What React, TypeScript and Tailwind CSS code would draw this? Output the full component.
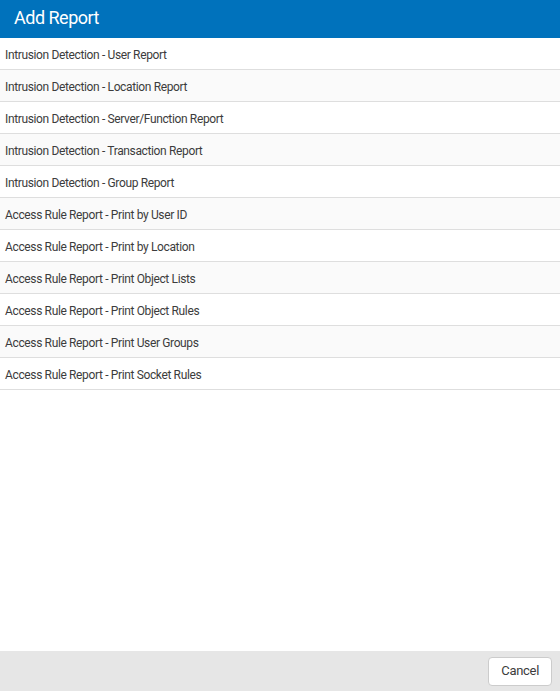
import React from "react";

const reports = [
  "Intrusion Detection - User Report",
  "Intrusion Detection - Location Report",
  "Intrusion Detection - Server/Function Report",
  "Intrusion Detection - Transaction Report",
  "Intrusion Detection - Group Report",
  "Access Rule Report - Print by User ID",
  "Access Rule Report - Print by Location",
  "Access Rule Report - Print Object Lists",
  "Access Rule Report - Print Object Rules",
  "Access Rule Report - Print User Groups",
  "Access Rule Report - Print Socket Rules",
];

export default function App() {
  return (
    <div
      className="flex flex-col w-[560px] h-[691px] bg-white text-[#3c3c3c]"
      style={{ fontFamily: "Roboto, 'Liberation Sans', sans-serif" }}
    >
      <div className="h-[38px] shrink-0 bg-[#0072bc] flex items-center px-[14px] pb-[3px]">
        <h1 className="text-white text-[18px] font-normal tracking-[-0.5px]">Add Report</h1>
      </div>
      <ul className="flex-1">
        {reports.map((r, i) => (
          <li
            key={r}
            className={
              "h-[32px] flex items-center px-[5px] pt-[2px] border-b border-[#dedede] text-[12px] tracking-[-0.36px] " +
              (i % 2 === 0 ? "bg-white" : "bg-[#fafafa]")
            }
          >
            {r}
          </li>
        ))}
      </ul>
      <div className="h-[40px] shrink-0 bg-[#e6e6e6] flex items-center justify-end px-[8px]">
        <button className="h-[29px] px-[12px] bg-white border border-[#cccccc] rounded-[4px] text-[13px] text-[#3c3c3c] tracking-[-0.3px]">
          Cancel
        </button>
      </div>
    </div>
  );
}
